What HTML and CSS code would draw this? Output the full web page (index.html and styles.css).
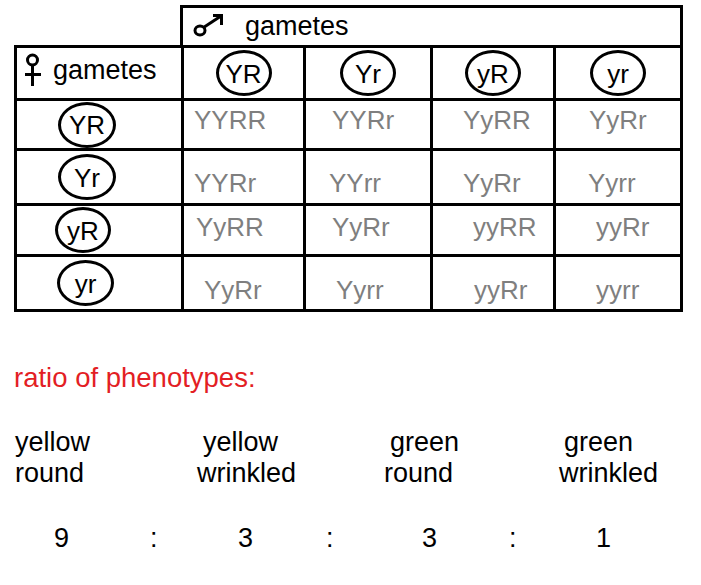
FILE: index.html
```html
<!DOCTYPE html>
<html lang="en">
<head>
<meta charset="utf-8">
<title>Dihybrid cross Punnett square</title>
<link rel="stylesheet" href="styles.css">
</head>
<body>
<div class="page">
  <div class="male-box">
    <svg class="sym-male" width="34" height="26" viewBox="0 0 34 26" aria-hidden="true">
      <ellipse cx="8" cy="18.5" rx="5" ry="4.5" fill="none" stroke="#000" stroke-width="3"/>
      <path d="M11.5 15.5 L29 4" fill="none" stroke="#000" stroke-width="3"/>
      <path d="M21 3.5 H29.5 V13" fill="none" stroke="#000" stroke-width="3"/>
    </svg>
    <span class="hdr-text">gametes</span>
  </div>
  <div class="square">
    <div class="cell corner">
      <svg class="sym-female" width="18" height="34" viewBox="0 0 18 34" aria-hidden="true">
        <circle cx="8.5" cy="7" r="5" fill="none" stroke="#000" stroke-width="3"/>
        <path d="M8.5 12 V33 M1 21.5 H17" fill="none" stroke="#000" stroke-width="3"/>
      </svg>
      <span class="hdr-text">gametes</span>
    </div>
    <div class="cell head"><span class="gam">YR</span></div>
    <div class="cell head"><span class="gam">Yr</span></div>
    <div class="cell head"><span class="gam">yR</span></div>
    <div class="cell head"><span class="gam">yr</span></div>

    <div class="cell side"><span class="gam tall">YR</span></div>
    <div class="cell geno r1 i10">YYRR</div>
    <div class="cell geno r1 i26">YYRr</div>
    <div class="cell geno r1 i30">YyRR</div>
    <div class="cell geno r1 i33">YyRr</div>

    <div class="cell side"><span class="gam tall">Yr</span></div>
    <div class="cell geno r2 i10">YYRr</div>
    <div class="cell geno r2 i23">YYrr</div>
    <div class="cell geno r2 i30">YyRr</div>
    <div class="cell geno r2 i32">Yyrr</div>

    <div class="cell side"><span class="gam tall s3">yR</span></div>
    <div class="cell geno r3 i12">YyRR</div>
    <div class="cell geno r3 i26">YyRr</div>
    <div class="cell geno r3 i40">yyRR</div>
    <div class="cell geno r3 i40">yyRr</div>

    <div class="cell side"><span class="gam tall s4">yr</span></div>
    <div class="cell geno r4 i20">YyRr</div>
    <div class="cell geno r4 i30">Yyrr</div>
    <div class="cell geno r4 i41">yyRr</div>
    <div class="cell geno r4 i40">yyrr</div>
  </div>

  <h2 class="ratio-title">ratio of phenotypes:</h2>

  <div class="phenos">
    <div class="pheno"><span>yellow</span><span>round</span></div>
    <div class="pheno"><span class="ind6">yellow</span><span>wrinkled</span></div>
    <div class="pheno"><span class="ind6">green</span><span>round</span></div>
    <div class="pheno"><span class="ind5">green</span><span>wrinkled</span></div>
  </div>

  <div class="ratio">
    <span>9</span><span>:</span><span>3</span><span>:</span><span>3</span><span>:</span><span>1</span>
  </div>
</div>
</body>
</html>
```

FILE: styles.css
```css
html, body {
  margin: 0;
  padding: 0;
  background: #fff;
}

body {
  font-family: "Liberation Sans", Arial, sans-serif;
  font-size: 27px;
  line-height: 30px;
  color: #000;
}

.page {
  padding-top: 5px;
  width: 701px;
}

/* male gametes header box */
.male-box {
  box-sizing: border-box;
  margin-left: 180px;
  margin-bottom: -3px;
  width: 503px;
  height: 43px;
  border: 3px solid #000;
  display: flex;
  align-items: flex-start;
  padding-left: 9px;
}

.sym-male {
  margin-top: 4px;
  flex: none;
}

.male-box .hdr-text {
  margin-left: 19px;
  margin-top: 3px;
}

/* punnett square grid */
.square {
  margin-left: 14px;
  width: fit-content;
  display: grid;
  grid-template-columns: 164px 119px 124px 120px 124px;
  grid-template-rows: 50px 47px 52px 48px 52px;
  gap: 3px;
  padding: 3px;
  background: #000;
}

.cell {
  background: #fff;
  box-sizing: border-box;
}

.corner {
  display: flex;
  align-items: flex-start;
  padding-left: 7px;
}

.sym-female {
  margin-top: 5px;
  flex: none;
}

.corner .hdr-text {
  margin-left: 11px;
  margin-top: 7px;
}

.head {
  display: flex;
  align-items: center;
  justify-content: center;
}

.side {
  display: flex;
  align-items: center;
  padding-left: 41px;
}

.gam {
  box-sizing: border-box;
  width: 56px;
  height: 46px;
  border: 3px solid #000;
  border-radius: 50%;
  display: flex;
  align-items: center;
  justify-content: center;
  padding-top: 1px;
  font-size: 26px;
  color: #000;
}

.gam.tall {
  width: 58px;
  height: 46px;
}

.gam.s3 {
  margin-left: -3px;
  width: 56px;
}

.gam.s4 {
  margin-left: -1px;
  width: 57px;
}

.geno {
  font-size: 26px;
  color: #7f7f7f;
}

.r1 { padding-top: 4px; }
.r2 { padding-top: 17px; }
.r3 { padding-top: 6px; }
.r4 { padding-top: 18px; }

.i10 { padding-left: 10px; }
.i12 { padding-left: 12px; }
.i20 { padding-left: 20px; }
.i23 { padding-left: 23px; }
.i26 { padding-left: 26px; }
.i30 { padding-left: 30px; }
.i32 { padding-left: 32px; }
.i33 { padding-left: 33px; }
.i40 { padding-left: 40px; }
.i41 { padding-left: 41px; }

/* ratio section */
.ratio-title {
  margin: 51px 0 0 0;
  padding-left: 14px;
  font-size: 27.5px;
  line-height: 30px;
  font-weight: normal;
  color: #e31e24;
}

.phenos {
  margin-top: 34px;
  padding-left: 15px;
  display: grid;
  grid-template-columns: 182px 187px 175px auto;
  line-height: 31px;
}

.pheno {
  display: flex;
  flex-direction: column;
  align-items: flex-start;
}

.ind5 { margin-left: 5px; }
.ind6 { margin-left: 6px; }

.ratio {
  margin-top: 34px;
  padding-left: 54px;
  display: grid;
  grid-template-columns: 96px 88px 88px 96px 87px 87px auto;
}
```
